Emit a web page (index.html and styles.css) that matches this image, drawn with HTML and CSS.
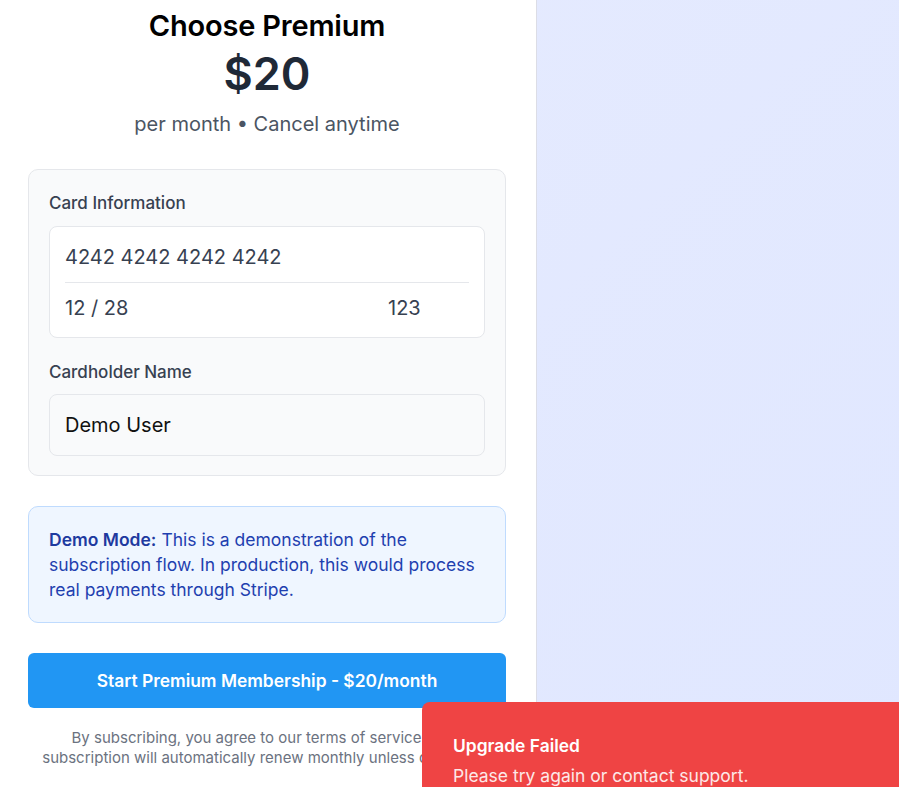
FILE: index.html
```html
<!DOCTYPE html>
<html>
<head>
<meta charset="utf-8">
<link rel="stylesheet" href="styles.css">
</head>
<body>
<div class="page">
  <div class="panel">
    <h1 class="title">Choose Premium</h1>
    <div class="price">$20</div>
    <p class="sub">per month • Cancel anytime</p>

    <div class="card">
      <div class="label">Card Information</div>
      <div class="card-input">
        <div class="num">4242 4242 4242 4242</div>
        <div class="row">
          <div class="exp">12 / 28</div>
          <div class="cvc">123</div>
        </div>
      </div>
      <div class="label label2">Cardholder Name</div>
      <div class="name-input">Demo User</div>
    </div>

    <div class="demo"><strong>Demo Mode:</strong> This is a demonstration of the subscription flow. In production, this would process real payments through Stripe.</div>

    <button class="btn">Start Premium Membership - $20/month</button>

    <p class="terms">By subscribing, you agree to our terms of service. Your subscription will automatically renew monthly unless cancelled.</p>
  </div>
</div>
<div class="toast">
  <div class="toast-title">Upgrade Failed</div>
  <div class="toast-msg">Please try again or contact support.</div>
</div>
</body>
</html>
```
FILE: styles.css
```css
* { box-sizing: border-box; }
html, body { margin: 0; padding: 0; height: 100%; }
body {
  font-family: Inter, "Noto Sans", sans-serif;
  background: linear-gradient(135deg, #e6ebfe 0%, #e0e7ff 100%);
  overflow: hidden;
}
.page { height: 100%; display: flex; }
.panel {
  width: 537px;
  height: 100%;
  background: #fff;
  border-right: 1px solid #dcdde6;
  padding: 7px 30px 0 28px;
}
.title {
  margin: 0;
  text-align: center;
  font-size: 29px;
  font-weight: 600;
  line-height: 38px;
  color: #000;
  letter-spacing: -0.2px;
}
.price {
  text-align: center;
  font-size: 45px;
  font-weight: 600;
  line-height: 56px;
  color: #1f2937;
  margin-top: 1px;
}
.sub {
  margin: 8px 0 0;
  text-align: center;
  font-size: 20px;
  line-height: 28px;
  color: #4b5563;
}
.card {
  margin-top: 31px;
  background: #f9fafb;
  border: 1px solid #e5e7eb;
  border-radius: 10px;
  padding: 21px 20px 19px 20px;
}
.label {
  font-size: 17px;
  font-weight: 500;
  line-height: 24px;
  color: #374151;
}
.label2 { margin-top: 22px; }
.card-input {
  margin-top: 11px;
  background: #fff;
  border: 1px solid #e5e7eb;
  border-radius: 8px;
  padding: 16px 15px 15px 15px;
  font-size: 20px;
  color: #374151;
}
.num {
  line-height: 28px;
  padding-bottom: 11px;
  border-bottom: 1px solid #e5e7eb;
}
.row { display: flex; line-height: 28px; padding-top: 11px; }
.exp { flex: 1; }
.cvc { width: 81px; }
.name-input {
  margin-top: 10px;
  background: #f9fafb;
  border: 1px solid #e5e7eb;
  border-radius: 8px;
  padding: 16px 15px;
  font-size: 20px;
  line-height: 28px;
  color: #111;
}
.demo {
  margin-top: 30px;
  background: #eff6ff;
  border: 1px solid #bfdbfe;
  border-radius: 10px;
  padding: 20px 20px 20px 20px;
  font-size: 17.5px;
  line-height: 25px;
  color: #1e40af;
}
.demo strong { font-weight: 600; color: #1e3a9f; }
.btn {
  display: block;
  width: 100%;
  margin-top: 30px;
  height: 55px;
  border: none;
  border-radius: 6px;
  background: #2196f3;
  color: #fff;
  font-family: Inter, sans-serif;
  font-size: 17.4px;
  font-weight: 600;
}
.terms {
  margin: 20px 0 0;
  text-align: center;
  font-size: 15px;
  line-height: 20px;
  color: #6b7280;
}
.toast {
  position: absolute;
  left: 422px;
  top: 702px;
  width: 500px;
  height: 120px;
  background: #ef4444;
  border-radius: 8px;
  padding: 33px 31px;
  color: #fff;
}
.toast-title { font-size: 17.4px; font-weight: 600; line-height: 22px; }
.toast-msg { font-size: 17.5px; line-height: 22px; margin-top: 8px; color: #fde8e8; }
```
